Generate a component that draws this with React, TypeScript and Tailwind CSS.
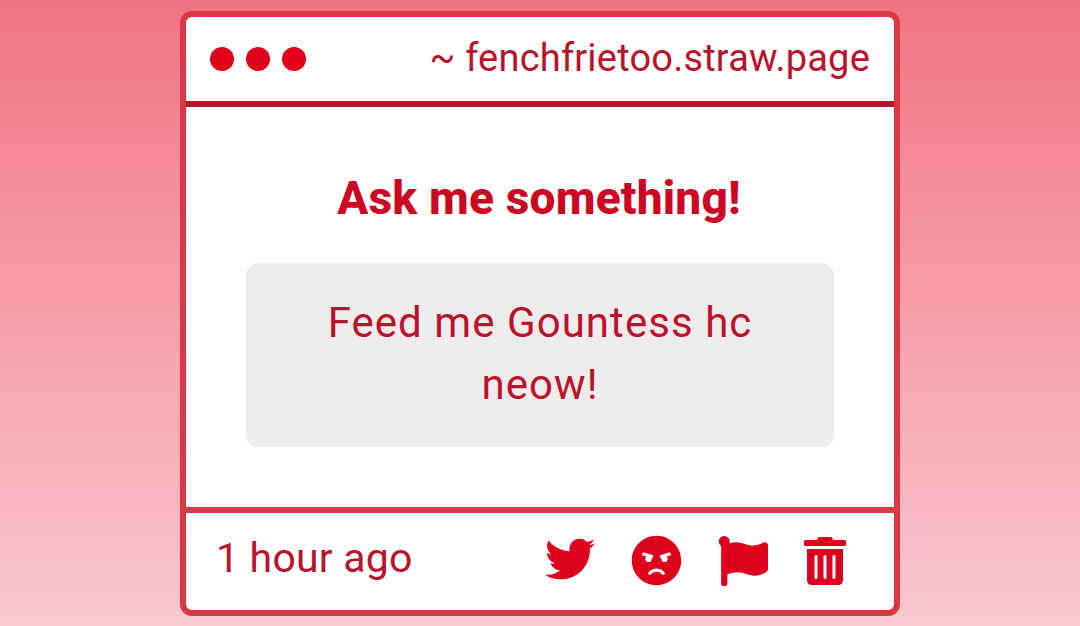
import { FaAngry, FaFlag, FaTrashAlt, FaTwitter } from "react-icons/fa";

const Header = () => {
    return (
        <header className="flex h-[90px] items-center justify-between border-b-6 border-[#b9122c] px-6">
            {/* Window dots */}
            <div className="flex gap-3">
                <span className="size-6 rounded-full bg-[#e0001b]" />
                <span className="size-6 rounded-full bg-[#e0001b]" />
                <span className="size-6 rounded-full bg-[#e0001b]" />
            </div>
            <p className="pb-[3px] text-[38px] leading-none font-[450] tracking-[0.2px] text-[#b8122c]">
                ~ fenchfrietoo.straw.page
            </p>
        </header>
    );
};

const Question = () => {
    return (
        <main className="flex h-[400px] flex-col items-center pt-[60px]">
            <h1 className="pr-[2px] text-[46px] leading-[62px] font-extrabold tracking-[0.2px] text-[#cc0622]">
                Ask me something!
            </h1>
            <div className="mt-[34px] flex h-[184px] w-[588px] items-center justify-center rounded-xl bg-[#eeecec] px-[60px] pb-[2px] text-center">
                <p className="text-[42px] leading-[62px] font-[450] tracking-[1.05px] text-[#bc112b]">
                    Feed me Gountess hc neow!
                </p>
            </div>
        </main>
    );
};

const Footer = () => {
    return (
        <footer className="flex h-[103px] items-center justify-between border-t-6 border-[#d43c48] pr-[45px] pb-[2px] pl-[30px]">
            <p className="pb-1 text-[41px] leading-none font-[450] tracking-[0.2px] text-[#b8122c]">
                1 hour ago
            </p>
            {/* Share, block, report and delete */}
            <div className="flex items-center gap-9 text-[#dc001c]">
                <FaTwitter size={50} className="mb-1" />
                <FaAngry size={51} />
                <FaFlag size={50} />
                <FaTrashAlt size={48} className="-ml-[3px]" />
            </div>
        </footer>
    );
};

export default function App() {
    return (
        <div className="flex h-[626px] justify-center overflow-hidden bg-linear-to-b from-[#f07384] to-[#f8c8d0] pt-[11px] font-['Roboto',sans-serif]">
            <div className="h-[605px] w-[720px] overflow-hidden rounded-xl border-6 border-[#da3844] bg-white">
                <Header />
                <Question />
                <Footer />
            </div>
        </div>
    );
}
